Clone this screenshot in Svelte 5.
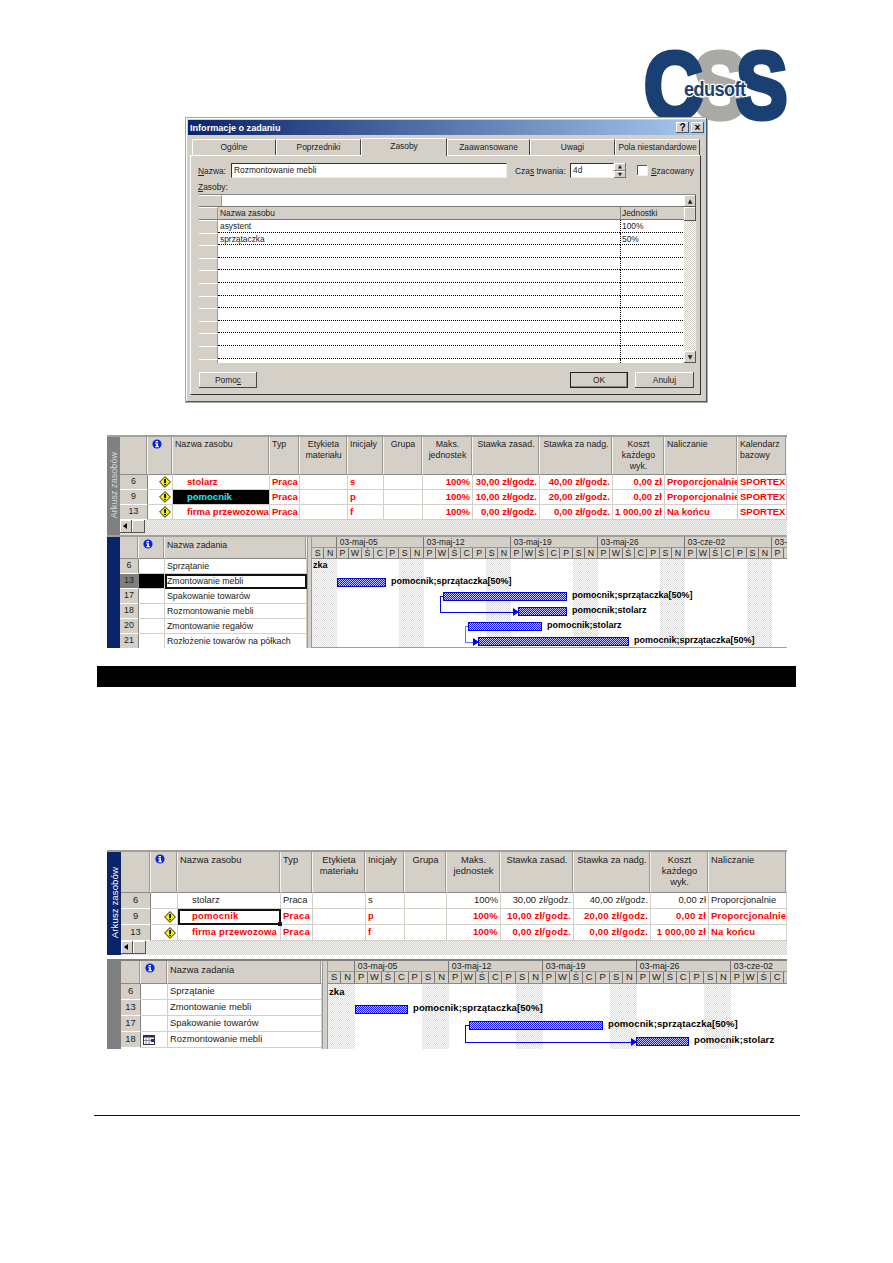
<script>
  const tabs = [
    { label: 'Ogólne', w: 84 },
    { label: 'Poprzedniki', w: 85 },
    { label: 'Zasoby', w: 86, active: true },
    { label: 'Zaawansowane', w: 83 },
    { label: 'Uwagi', w: 85 },
    { label: 'Pola niestandardowe', w: 85 }
  ];
  const blankRows = Array.from({ length: 10 }, (_, i) => i);

  const dayNames = ['P', 'W', 'Ś', 'C', 'P', 'S', 'N'];
  const weekNames = ['03-maj-05', '03-maj-12', '03-maj-19', '03-maj-26', '03-cze-02', '03-'];
  const allDays = ['S', 'N', ...weekNames.flatMap(() => dayNames)];

  // Only the day cells that begin inside the visible chart width.
  const visibleDays = (day, width) => allDays.slice(0, Math.floor(width / day));

  const sheetA = {
    cls: 'a',
    topSide: 'side-grey',
    botSide: 'side-navy',
    cols: [28, 25, 97, 30, 48, 36, 39, 50, 67, 73, 52, 73, 49],
    headers: [
      ['', 'c'], ['i', 'c'], ['Nazwa zasobu', 'l'], ['Typ', 'l'], ['Etykieta materiału', 'c'], ['Inicjały', 'l'], ['Grupa', 'c'],
      ['Maks. jednostek', 'c'], ['Stawka zasad.', 'c'], ['Stawka za nadg.', 'c'], ['Koszt każdego wyk.', 'c'], ['Naliczanie', 'l'], ['Kalendarz bazowy', 'l']
    ],
    rows: [
      { id: 6, warn: true, red: true, name: 'stolarz', ini: 's', r1: '30,00 zł/godz.', r2: '40,00 zł/godz.', k: '0,00 zł', n: 'Proporcjonalnie', cal: 'SPORTEX' },
      { id: 9, warn: true, red: true, sel: 'black', name: 'pomocnik', ini: 'p', r1: '10,00 zł/godz.', r2: '20,00 zł/godz.', k: '0,00 zł', n: 'Proporcjonalnie', cal: 'SPORTEX' },
      { id: 13, warn: true, red: true, name: 'firma przewozowa', ini: 'f', r1: '0,00 zł/godz.', r2: '0,00 zł/godz.', k: '1 000,00 zł', n: 'Na końcu', cal: 'SPORTEX' }
    ],
    tasks: [
      { id: 6, name: 'Sprzątanie' },
      { id: 13, name: 'Zmontowanie mebli', sel: true },
      { id: 17, name: 'Spakowanie towarów' },
      { id: 18, name: 'Rozmontowanie mebli' },
      { id: 20, name: 'Zmontowanie regałów' },
      { id: 21, name: 'Rozłożenie towarów na półkach' }
    ],
    taskCols: [19, 26, 142],
    day: 12.43,
    chartW: 475,
    zka: 0,
    bars: [
      { x: 25, y: 19, w: 49, label: 'pomocnik;sprzątaczka[50%]' },
      { x: 131, y: 33, w: 124, label: 'pomocnik;sprzątaczka[50%]' },
      { x: 206, y: 48, w: 49, label: 'pomocnik;stolarz' },
      { x: 156, y: 63, w: 74, label: 'pomocnik;stolarz' },
      { x: 166, y: 78, w: 151, label: 'pomocnik;sprzątaczka[50%]' }
    ],
    links: [
      { x: 128, y1: 37, y2: 52, to: 206, cls: '' },
      { x: 153, y1: 67, y2: 82, to: 166, cls: 'pale' }
    ]
  };

  const sheetB = {
    cls: 'b',
    topSide: 'side-navy',
    botSide: 'side-grey',
    cols: [30, 27, 103, 32, 53, 39, 42, 54, 73, 77, 58, 78],
    headers: [
      ['', 'c'], ['i', 'c'], ['Nazwa zasobu', 'l'], ['Typ', 'l'], ['Etykieta materiału', 'c'], ['Inicjały', 'l'], ['Grupa', 'c'],
      ['Maks. jednostek', 'c'], ['Stawka zasad.', 'c'], ['Stawka za nadg.', 'c'], ['Koszt każdego wyk.', 'c'], ['Naliczanie', 'l']
    ],
    rows: [
      { id: 6, name: 'stolarz', ini: 's', r1: '30,00 zł/godz.', r2: '40,00 zł/godz.', k: '0,00 zł', n: 'Proporcjonalnie' },
      { id: 9, warn: true, red: true, sel: 'frame', name: 'pomocnik', ini: 'p', r1: '10,00 zł/godz.', r2: '20,00 zł/godz.', k: '0,00 zł', n: 'Proporcjonalnie' },
      { id: 13, warn: true, red: true, name: 'firma przewozowa', ini: 'f', r1: '0,00 zł/godz.', r2: '0,00 zł/godz.', k: '1 000,00 zł', n: 'Na końcu' }
    ],
    tasks: [
      { id: 6, name: 'Sprzątanie' },
      { id: 13, name: 'Zmontowanie mebli' },
      { id: 17, name: 'Spakowanie towarów' },
      { id: 18, name: 'Rozmontowanie mebli', cal: true }
    ],
    taskCols: [20, 27, 154],
    day: 13.43,
    chartW: 459,
    zka: 2,
    bars: [
      { x: 27, y: 21, w: 53, label: 'pomocnik;sprzątaczka[50%]' },
      { x: 141, y: 37, w: 134, label: 'pomocnik;sprzątaczka[50%]' },
      { x: 308, y: 53, w: 53, label: 'pomocnik;stolarz' }
    ],
    links: [{ x: 137, y1: 41, y2: 57, to: 308, cls: '' }]
  };
</script>

{#snippet info()}
  <svg class="ico-info" viewBox="0 0 10 10" aria-hidden="true">
    <circle cx="5" cy="5" r="4.6" fill="#0a24e0" />
    <rect x="3.6" y="2" width="2.4" height="1.4" fill="#fff" />
    <path d="M3.2 4.2H6V7.2H7V8.2H3.2V7.2H4.2V5.2H3.2Z" fill="#fff" />
  </svg>
{/snippet}

{#snippet warn()}
  <svg class="ico-warn" viewBox="0 0 12 12" aria-hidden="true">
    <path d="M6 .6 11.4 6 6 11.4 .6 6Z" fill="#f4f000" stroke="#222" stroke-width="1" />
    <rect x="5.2" y="3" width="1.7" height="4" fill="#000" />
    <rect x="5.2" y="7.8" width="1.7" height="1.4" fill="#000" />
  </svg>
{/snippet}

{#snippet cal()}
  <svg class="ico-cal" viewBox="0 0 12 10" aria-hidden="true">
    <rect x=".5" y=".5" width="11" height="9" fill="#fff" stroke="#333" />
    <rect x=".5" y=".5" width="11" height="2" fill="#2a2a5a" />
    <path d="M3 3v6M6 3v6M1 5.5h10" stroke="#888" />
    <rect x="8" y="4" width="3" height="3" fill="#0a24e0" />
  </svg>
{/snippet}

{#snippet sheet(s)}
  <section class="sheet {s.cls}">
    <div class="pane top-pane">
      <div class="side {s.topSide}"><span>Arkusz zasobów</span></div>
      <div class="pane-body">
        <div class="grid head" style="grid-template-columns:{s.cols.map((c) => c + 'px').join(' ')}">
          {#each s.headers as h}
            <div class="hcell {h[1]}">
              {#if h[0] === 'i'}{@render info()}{:else}{h[0]}{/if}
            </div>
          {/each}
        </div>
        {#each s.rows as r}
          <div class="grid row" class:red={r.red} style="grid-template-columns:{s.cols.map((c) => c + 'px').join(' ')}">
            <div class="idcell">{r.id}</div>
            <div class="cell warncell">{#if r.warn}{@render warn()}{/if}</div>
            <div class="cell name" class:sel-black={r.sel === 'black'} class:sel-frame={r.sel === 'frame'}>{r.name}</div>
            <div class="cell">Praca</div>
            <div class="cell"></div>
            <div class="cell">{r.ini}</div>
            <div class="cell"></div>
            <div class="cell right">100%</div>
            <div class="cell right">{r.r1}</div>
            <div class="cell right">{r.r2}</div>
            <div class="cell right">{r.k}</div>
            <div class="cell">{r.n}</div>
            {#if r.cal}<div class="cell">{r.cal}</div>{/if}
          </div>
        {/each}
        <div class="hscroll">
          <span class="sbtn arrow-l"></span>
          <span class="sbtn thumb"></span>
        </div>
      </div>
    </div>
    <div class="pane bot-pane">
      <div class="side {s.botSide}"></div>
      <div class="pane-body split">
        <div class="tasks">
          <div class="grid thead" style="grid-template-columns:{s.taskCols.map((c) => c + 'px').join(' ')}">
            <div class="hcell c"></div>
            <div class="hcell c">{@render info()}</div>
            <div class="hcell l tall">Nazwa zadania</div>
          </div>
          {#each s.tasks as t}
            <div class="grid trow" style="grid-template-columns:{s.taskCols.map((c) => c + 'px').join(' ')}">
              <div class="idcell" class:iddark={t.sel}>{t.id}</div>
              <div class="cell calcell" class:blackcell={t.sel}>{#if t.cal}{@render cal()}{/if}</div>
              <div class="cell tname" class:sel-frame={t.sel}>{t.name}</div>
            </div>
          {/each}
        </div>
        <div class="splitter"></div>
        <div class="gantt">
          <div class="weeks">
            <div class="week" style="width:{s.day * 2}px"></div>
            {#each weekNames as w, i}
              {#if s.day * (2 + 7 * i) < s.chartW}
                <div class="week" style="width:{s.day * 7}px">{w}</div>
              {/if}
            {/each}
          </div>
          <div class="days">
            {#each visibleDays(s.day, s.chartW) as d}
              <div class="dayc" style="width:{s.day}px">{d}</div>
            {/each}
          </div>
          <div class="chart">
            {#each [0, 1, 2, 3, 4, 5] as n}
              <div class="weekend" style="left:{s.day * (7 * n)}px;width:{s.day * 2}px"></div>
            {/each}
            <b class="barlabel" style="left:1px;top:{s.zka}px">zka</b>
            {#each s.links as l}
              <div class="link {l.cls}" style="left:{l.x}px;top:{l.y1}px;height:{l.y2 - l.y1}px;width:{l.to - l.x}px"></div>
              <div class="arrow {l.cls}" style="left:{l.to - 5}px;top:{l.y2 - 3}px"></div>
            {/each}
            {#each s.bars as b}
              <svg class="bar" style="left:{b.x}px;top:{b.y}px" width={b.w} height="9" shape-rendering="crispEdges" aria-hidden="true">
                <rect width={b.w} height="9" fill="url(#hatch)" />
                <rect x=".5" y=".5" width={b.w - 1} height="8" fill="none" stroke="#0000f0" />
              </svg>
              <b class="barlabel" style="left:{b.x + b.w + 5}px;top:{b.y - 3}px">{b.label}</b>
            {/each}
          </div>
        </div>
      </div>
    </div>
  </section>
{/snippet}

<svg class="defs" width="0" height="0" aria-hidden="true">
  <defs>
    <pattern id="hatch" width="2" height="2" patternUnits="userSpaceOnUse">
      <rect width="2" height="2" fill="#c8c8ff" />
      <rect width="1" height="1" fill="#1414f4" />
      <rect x="1" y="1" width="1" height="1" fill="#1414f4" />
    </pattern>
  </defs>
</svg>

<main class="page">
  <div class="logo" aria-label="CSS edusoft">
    <span class="lg l2">S</span>
    <span class="lg l1">C</span>
    <span class="lg l3">S</span>
    <span class="edu">edusoft</span>
  </div>

  <section class="dialog">
    <header class="title">
      <span>Informacje o zadaniu</span>
      <span class="tbtns"><i class="tbtn">?</i><i class="tbtn">×</i></span>
    </header>
    <nav class="tabs">
      {#each tabs as t}
        <div class="tab" class:active={t.active} style="width:{t.w}px">{t.label}</div>
      {/each}
    </nav>
    <div class="panel">
      <div class="form">
        <label class="lab lab1" for="nm"><u>N</u>azwa:</label>
        <div class="inp inp1" id="nm">Rozmontowanie mebli</div>
        <span class="lab lab2">Cza<u>s</u> trwania:</span>
        <div class="inp inp2">4d</div>
        <div class="spin"><i>▲</i><i>▼</i></div>
        <span class="chk"></span>
        <span class="lab"><u>S</u>zacowany</span>
      </div>
      <div class="lab zas"><u>Z</u>asoby:</div>
      <div class="rtable">
        <div class="rmain">
          <div class="entry"><span class="rsel wide"></span><span class="entry-in"></span></div>
          <div class="rhead"><span class="rsel"></span><span class="rn">Nazwa zasobu</span><span class="ru">Jednostki</span></div>
          <div class="rrow"><span class="rsel"></span><span class="rn">asystent</span><span class="ru">100%</span></div>
          <div class="rrow"><span class="rsel"></span><span class="rn">sprzątaczka</span><span class="ru">50%</span></div>
          {#each blankRows as i}
            <div class="rrow"><span class="rsel"></span><span class="rn"></span><span class="ru"></span></div>
          {/each}
        </div>
        <div class="vscroll">
          <span class="vbtn">▲</span>
          <span class="vbtn vthumb"></span>
          <span class="vtrack"></span>
          <span class="vbtn">▼</span>
        </div>
      </div>
      <div class="buttons">
        <button class="btn">Pomo<u>c</u></button>
        <span class="grow"></span>
        <button class="btn def">OK</button>
        <button class="btn last">Anuluj</button>
      </div>
    </div>
  </section>

  {@render sheet(sheetA)}
  <div class="blackbar"></div>
  {@render sheet(sheetB)}
  <div class="footer-rule"></div>
</main>

<style>
  :global(body) { margin: 0; background: #fff; }
  .defs { position: absolute; }
  .page {
    width: 893px;
    height: 1263px;
    overflow: hidden;
    background: #fff;
    display: flex;
    flex-direction: column;
    align-items: flex-start;
    font-family: "Liberation Sans", Arial, sans-serif;
    font-size: 9px;
    color: #222;
  }

  /* logo */
  .logo { position: relative; margin: 53px 0 0 643px; width: 144px; height: 64px; flex: none; }
  .lg {
    position: absolute;
    top: 0;
    font: 900 92px/64px "Liberation Sans", Arial, sans-serif;
    -webkit-text-stroke: 5px currentColor;
    transform-origin: 0 50%;
  }
  .l1 { left: 1px; color: #1a3f72; transform: scale(.88, 1.02); }
  .l2 { left: 50px; color: #a9aaa6; transform: scale(.88, 1.02); }
  .l3 { left: 93px; color: #1a3f72; transform: scale(.84, 1.02); }
  .edu {
    position: absolute;
    left: 41px;
    top: 26px;
    color: #1a3f72;
    font: 700 21px/19px "Liberation Sans", Arial, sans-serif;
    letter-spacing: -.6px;
    -webkit-text-stroke: 2.5px #fff;
    paint-order: stroke fill;
    transform: scaleX(.86);
    transform-origin: 0 50%;
  }

  /* dialog */
  .dialog {
    position: relative;
    flex: none;
    width: 523px;
    height: 286px;
    box-sizing: border-box;
    margin-left: 185px;
    padding: 2px;
    background: #d4d0c8;
    border: 1px solid #a8a8a4;
    box-shadow: inset -1px -1px 0 #555, inset 1px 1px 0 #fff;
    display: flex;
    flex-direction: column;
    font-size: 8.4px;
  }
  .title {
    height: 15px;
    flex: none;
    display: flex;
    align-items: center;
    justify-content: space-between;
    padding: 0 1px 0 2px;
    background: linear-gradient(90deg, #0a246a, #a6caf0);
    color: #fff;
    font-weight: 700;
    font-size: 9.1px;
  }
  .tbtns { display: flex; gap: 2px; }
  .tbtn {
    width: 13px; height: 11px;
    background: #d4d0c8;
    color: #000;
    font: 700 10px/11px "Liberation Sans", sans-serif;
    text-align: center;
    box-shadow: inset -1px -1px 0 #555, inset 1px 1px 0 #fff;
  }
  .tabs { display: flex; align-items: flex-end; height: 18px; margin: 2px 0 0 4px; flex: none; }
  .tab {
    height: 16px;
    box-sizing: border-box;
    background: #d4d0c8;
    border-top: 1px solid #fff;
    border-left: 1px solid #fff;
    border-right: 1px solid #444;
    text-align: center;
    line-height: 15px;
    white-space: nowrap;
    overflow: hidden;
  }
  .tab.active { height: 18px; line-height: 15px; position: relative; z-index: 1; margin-bottom: -1px; }
  .panel {
    flex: none;
    height: 240px;
    margin: 0 4px 0 2px;
    box-sizing: border-box;
    padding: 7px 6px 0 8px;
    border-top: 1px solid #fff;
    border-left: 1px solid #fff;
    border-right: 1px solid #333;
    border-bottom: 1px solid #333;
    display: flex;
    flex-direction: column;
  }
  .form { display: flex; align-items: center; height: 15px; flex: none; margin-left: -1px; }
  .lab { white-space: nowrap; }
  .lab1 { width: 33px; flex: none; }
  .lab2 { width: 55px; flex: none; margin-left: 8px; }
  .inp {
    height: 15px;
    box-sizing: border-box;
    background: #fff;
    border-top: 1px solid #333;
    border-left: 1px solid #333;
    border-bottom: 1px solid #eee;
    border-right: 1px solid #eee;
    padding-left: 2px;
    line-height: 12px;
    flex: none;
  }
  .inp1 { width: 276px; }
  .inp2 { width: 44px; }
  .spin { width: 12px; height: 15px; display: flex; flex-direction: column; flex: none; }
  .spin i {
    flex: 1;
    font: 5px/7px "DejaVu Sans", sans-serif;
    text-align: center;
    box-shadow: inset -1px -1px 0 #777, inset 1px 1px 0 #fff;
    overflow: hidden;
  }
  .chk {
    width: 10px; height: 10px;
    margin: 0 3px 0 11px;
    flex: none;
    background: #fff;
    box-shadow: inset 1px 1px 0 #555;
    border-right: 1px solid #eee;
    border-bottom: 1px solid #eee;
  }
  .zas { margin: 3px 0 0 -1px; line-height: 12px; height: 13px; flex: none; }
  .rtable {
    display: flex;
    flex: none;
    width: 497px;
    height: 169px;
    overflow: hidden;
    background: #fff;
    border-top: 1px solid #888;
    box-sizing: border-box;
  }
  .rmain { width: 485px; flex: none; overflow: hidden; }
  .rsel {
    width: 18px;
    flex: none;
    background: #d4d0c8;
    border-top: 1px solid #fff;
    border-right: 1px solid #999;
    box-sizing: content-box;
    align-self: stretch;
  }
  .rsel.wide { width: 22px; }
  .entry { display: flex; height: 11px; border-bottom: 1px solid #777; }
  .entry-in { flex: 1; background: #fff; }
  .rhead { display: flex; height: 12px; background: #d4d0c8; border-bottom: 1px solid #777; line-height: 12px; }
  .rrow { display: flex; height: 12.6px; line-height: 12px; }
  .rn { width: 402px; flex: none; padding-left: 2px; box-sizing: border-box; }
  .rrow .rn, .rrow .ru { border-bottom: 1px dotted #000; }
  .ru { width: 63px; flex: none; padding-left: 1px; box-sizing: border-box; border-left: 1px dotted #000; }
  .rhead .ru { border-left: 1px solid #888; }
  .vscroll { width: 12px; flex: none; display: flex; flex-direction: column; height: 168px; }
  .vbtn {
    height: 12px; flex: none;
    background: #d4d0c8;
    font: 6px/12px "DejaVu Sans", sans-serif;
    text-align: center;
    box-shadow: inset -1px -1px 0 #555, inset 1px 1px 0 #fff;
  }
  .vthumb { height: 14px; }
  .vtrack {
    flex: 1;
    background: repeating-conic-gradient(#d4d0c8 0 25%, #fff 0 50%) 0 0 / 2px 2px;
  }
  .buttons { display: flex; gap: 7px; margin-top: 9px; flex: none; width: 495px; }
  .grow { flex: 1; }
  .btn {
    width: 58px;
    height: 16px;
    padding: 0;
    flex: none;
    border: none;
    background: #d4d0c8;
    box-shadow: inset -1px -1px 0 #444, inset 1px 1px 0 #fff;
    font: inherit;
    color: #222;
  }
  .btn.last { width: 59px; }
  .btn.def { box-shadow: inset 0 0 0 1px #222, inset -2px -2px 0 #888; }

  /* black bar and footer */
  .blackbar { flex: none; width: 699px; height: 21px; margin: 18px 0 0 97px; background: #000; }
  .footer-rule { flex: none; width: 706px; height: 1px; margin: 66px 0 0 94px; background: #111; }

  /* sheet */
  .sheet {
    flex: none;
    width: 680px;
    margin-left: 107px;
    border-top: 2px solid #a0a09c;
    box-sizing: border-box;
    display: flex;
    flex-direction: column;
    overflow: hidden;
    background: #fff;
  }
  .sheet.a { height: 213px; margin-top: 32px; font-size: 8.8px; }
  .sheet.b { height: 199px; margin-top: 163px; font-size: 9.4px; }
  .pane { display: flex; flex: none; }
  .side { flex: none; display: flex; align-items: center; justify-content: flex-end; flex-direction: column; color: #fff; }
  .a .side { width: 13px; }
  .b .side { width: 14px; }
  .side span {
    writing-mode: vertical-rl;
    transform: rotate(180deg);
    white-space: nowrap;
    padding-top: 17px;
  }
  .a .side span { font-size: 9px; letter-spacing: .05px; }
  .b .side span { font-size: 9.7px; letter-spacing: .05px; }
  .side-grey { background: #808080; color: #d8d8d8; }
  .side-navy { background: #0a246a; }
  .a .top-pane { height: 98px; }
  .b .top-pane { height: 103px; }
  .a .bot-pane { height: 111px; border-top: 2px solid #a0a09c; }
  .b .bot-pane { height: 88px; margin-top: 4px; border-top: 2px solid #808080; }
  .pane-body { flex: 1; min-width: 0; display: flex; flex-direction: column; }
  .split { flex-direction: row; }
  .grid { display: grid; flex: none; }
  .a .head { height: 38px; }
  .b .head { height: 41px; }
  .hcell {
    background: #d4d0c8;
    box-sizing: border-box;
    padding: 2px 2px 0;
    line-height: 11px;
    border-right: 1px solid #f4f2ee;
    border-bottom: 1px solid #8a8a86;
    box-shadow: inset -1px 0 0 #9a9a96;
    overflow: hidden;
  }
  .hcell.c { text-align: center; }
  .hcell.l { text-align: left; }
  .a .row { height: 15px; }
  .b .row { height: 16px; }
  .row.red .cell { color: #f00; font-weight: 700; font-size: 9.5px; }
  .b .row.red .cell { letter-spacing: .2px; }
  .cell {
    background: #fff;
    border-right: 1px solid #d4d0c8;
    border-bottom: 1px solid #d4d0c8;
    box-sizing: border-box;
    padding: 0 2px;
    line-height: 14px;
    white-space: nowrap;
    overflow: hidden;
  }
  .warncell { display: flex; align-items: center; justify-content: flex-end; padding-right: 1px; }
  .calcell { display: flex; align-items: center; justify-content: flex-start; }
  .right { text-align: right; }
  .name { padding-left: 14px; }
  .idcell {
    background: #d4d0c8;
    border-right: 1px solid #808080;
    border-bottom: 1px solid #fff;
    box-sizing: border-box;
    text-align: center;
    line-height: 13px;
  }
  .iddark { background: #808080; }
  .blackcell { background: #000; }
  .row.red .sel-black { background: #000; color: #1fe8e8; }
  .sel-frame { outline: 2px solid #111; outline-offset: -2px; position: relative; overflow: visible; }
  .row .sel-frame::after {
    content: "";
    position: absolute;
    right: -2px;
    bottom: -2px;
    width: 4px;
    height: 4px;
    background: #111;
  }
  .hscroll {
    flex: 1;
    display: flex;
    align-items: flex-start;
    background: repeating-conic-gradient(#d4d0c8 0 25%, #f6f5f2 0 50%) 0 0 / 2px 2px;
  }
  .sbtn {
    height: 13px;
    width: 12px;
    flex: none;
    background: #d4d0c8;
    box-shadow: inset -1px -1px 0 #555, inset 1px 1px 0 #fff;
    position: relative;
  }
  .thumb { width: 13px; }
  .arrow-l::after {
    content: "";
    position: absolute;
    left: 3px; top: 3px;
    border: 3.5px solid transparent;
    border-left: 0;
    border-right: 4px solid #000;
  }
  .tasks { flex: none; }
  .a .thead { height: 22px; }
  .b .thead { height: 23px; }
  .tall { line-height: 13px; }
  .a .trow { height: 15px; }
  .b .trow { height: 16px; }
  .tname { padding-left: 2px; }
  .splitter { flex: none; background: #d4d0c8; border-left: 1px solid #999; border-right: 1px solid #999; box-sizing: border-box; }
  .a .splitter { width: 5px; }
  .b .splitter { width: 6px; }
  .gantt { flex: 1; min-width: 0; overflow: hidden; display: flex; flex-direction: column; }
  .weeks, .days { display: flex; flex: none; height: 11px; background: #d4d0c8; overflow: hidden; }
  .days { border-bottom: 1px solid #8a8a86; box-sizing: border-box; }
  .b .days { height: 12px; }
  .week { flex: none; box-sizing: border-box; border-right: 1px solid #777; border-bottom: 1px solid #999; padding-left: 3px; line-height: 11px; white-space: nowrap; overflow: hidden; }
  .a .week { font-size: 8.4px; }
  .b .week { font-size: 8.8px; }
  .dayc { flex: none; box-sizing: border-box; border-right: 1px solid #777; text-align: center; line-height: 10px; }
  .chart { position: relative; flex: 1; }
  .a .chart { border-bottom: 1px solid #a0a09c; }
  .weekend {
    position: absolute;
    top: 0; bottom: 0;
    background: repeating-conic-gradient(#dadada 0 25%, #fff 0 50%) 0 0 / 2px 2px;
  }
  .bar { position: absolute; display: block; }
  .barlabel {
    position: absolute;
    white-space: nowrap;
    font-weight: 700;
    color: #000;
    line-height: 12px;
  }
  .a .barlabel { font-size: 9px; }
  .b .barlabel { font-size: 9.5px; letter-spacing: .1px; }
  .link {
    position: absolute;
    box-sizing: content-box;
    border-left: 1px solid #0000f0;
    border-bottom: 1px solid #0000f0;
    border-top: 1px solid #0000f0;
    clip-path: polygon(0 0, 4px 0, 4px calc(100% - 2px), 100% calc(100% - 2px), 100% 100%, 0 100%);
  }
  .link.pale { border-color: #7070ff; }
  .arrow {
    position: absolute;
    width: 0; height: 0;
    border-top: 4px solid transparent;
    border-bottom: 4px solid transparent;
    border-left: 6px solid #0000f0;
  }
  .ico-info { width: 10px; height: 10px; display: block; margin-left: 2px; }
  .ico-warn { width: 12px; height: 12px; display: block; }
  .ico-cal { width: 12px; height: 10px; display: block; }
</style>
